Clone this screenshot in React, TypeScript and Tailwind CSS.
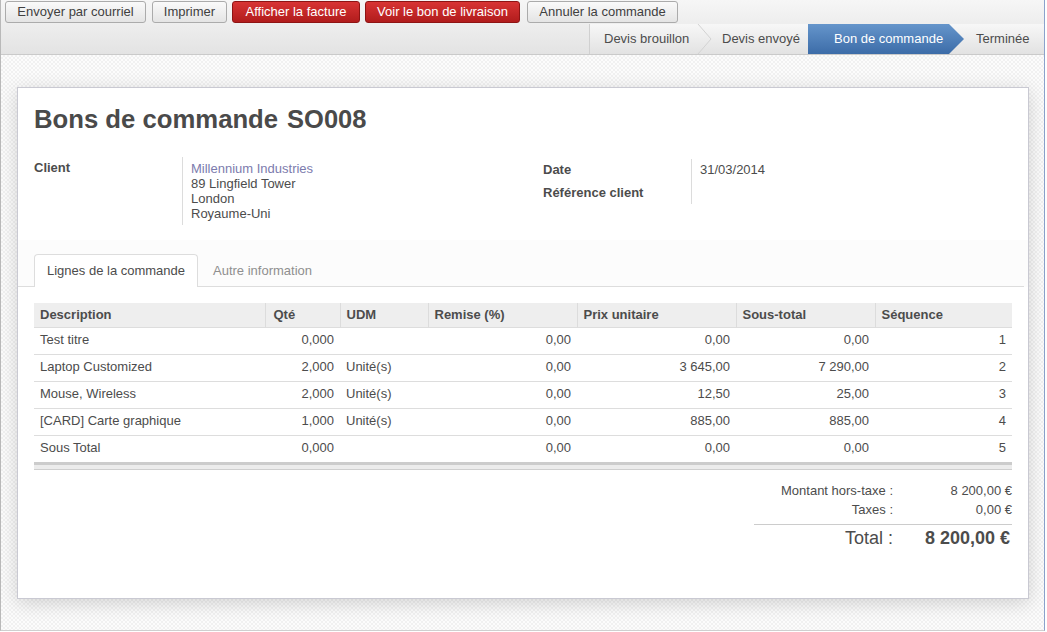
const rows = [
  { desc: "Test titre", qty: "0,000", udm: "", remise: "0,00", prix: "0,00", total: "0,00", seq: "1" },
  { desc: "Laptop Customized", qty: "2,000", udm: "Unité(s)", remise: "0,00", prix: "3 645,00", total: "7 290,00", seq: "2" },
  { desc: "Mouse, Wireless", qty: "2,000", udm: "Unité(s)", remise: "0,00", prix: "12,50", total: "25,00", seq: "3" },
  { desc: "[CARD] Carte graphique", qty: "1,000", udm: "Unité(s)", remise: "0,00", prix: "885,00", total: "885,00", seq: "4" },
  { desc: "Sous Total", qty: "0,000", udm: "", remise: "0,00", prix: "0,00", total: "0,00", seq: "5" },
];

function Btn({ label, red, className }: { label: string; red?: boolean; className?: string }) {
  return (
    <button
      className={
        (red
          ? "h-[22px] shrink-0 whitespace-nowrap rounded-[3px] border border-[#8e1414] bg-[linear-gradient(#d83434,#b11c1c)] text-[13px] leading-[20px] text-white "
          : "h-[22px] shrink-0 whitespace-nowrap rounded-[3px] border border-[#ababab] bg-[linear-gradient(#fafafa,#e4e4e4)] text-[13px] leading-[20px] text-[#404040] ") +
        (className ?? "")
      }
    >
      {label}
    </button>
  );
}

function Chevron() {
  return (
    <svg width="16" height="30" viewBox="0 0 16 30" className="shrink-0">
      <path d="M1 0 L14 15 L1 30" fill="none" stroke="#d2d2d2" strokeWidth="1" />
    </svg>
  );
}

export default function App() {
  const th = "border-r border-[#dcdcdc] px-[6px] text-left font-bold";
  const td = "px-[6px] pb-[2px]";
  return (
    <div className="h-[632px] w-[1047px] overflow-hidden bg-white font-['Liberation_Sans',Arial,sans-serif] text-[13px] text-[#4c4c4c]">
      <div className="flex h-[631px] w-[1045px] flex-col border-b border-l border-r border-b-[#cfcfcf] border-l-[#b9b9b9] border-r-[#8aa2cc]">
        {/* header */}
        <div className="h-[55px] shrink-0 border-b border-[#cacaca] bg-[linear-gradient(#f6f6f6,#e3e3e3)]">
          <div className="flex h-[24px] items-start pl-[4px] pt-[1px]">
            <Btn label="Envoyer par courriel" className="w-[141px]" />
            <Btn label="Imprimer" className="ml-[6px] w-[75px]" />
            <Btn label="Afficher la facture" red className="ml-[5px] w-[128px]" />
            <Btn label="Voir le bon de livraison" red className="ml-[5px] w-[155px]" />
            <Btn label="Annuler la commande" className="ml-[7px] w-[151px]" />
          </div>
          <div className="flex h-[30px] justify-end">
            <div className="flex h-[30px] items-stretch whitespace-nowrap border-l border-[#d0d0d0] bg-[linear-gradient(#f7f7f7,#e2e2e2)]">
              <div className="flex w-[107px] items-center pl-[14px]">Devis brouillon</div>
              <Chevron />
              <div className="flex w-[95px] items-center pl-[9px]">Devis envoyé</div>
              <div className="flex w-[156px] items-center bg-[linear-gradient(#6595cb,#3c6ca8)] pl-[26px] text-white [clip-path:polygon(0_0,141px_0,156px_50%,141px_100%,0_100%)]">
                Bon de commande
              </div>
              <div className="flex w-[80px] items-center pl-[12px]">Terminée</div>
            </div>
          </div>
        </div>

        {/* content */}
        <div className="flex-1 bg-[repeating-conic-gradient(#f1f1f1_0_25%,#fcfcfc_0_50%)] bg-[length:4px_4px] pl-[16px] pt-[32px]">
          <div className="h-[512px] w-[1012px] border border-[#c9c9d2] bg-white shadow-[0_4px_18px_rgba(0,0,0,0.16)]">
            <div className="px-[16px] pt-[15px]">
              <h1 className="flex items-baseline gap-[9px] text-[25.7px] font-bold leading-[32px] text-[#4a4a4a]">
                <span>Bons de commande</span>
                <span className="text-[25.5px]">SO008</span>
              </h1>

              <div className="mt-[22px] flex">
                <div className="flex w-[509px]">
                  <div className="w-[148px] pt-[3px] font-bold leading-[15px]">Client</div>
                  <div className="border-l border-[#dcdcdc] py-[4px] pl-[8px] leading-[15px]">
                    <div className="text-[#7c7bad]">Millennium Industries</div>
                    <div>89 Lingfield Tower</div>
                    <div>London</div>
                    <div>Royaume-Uni</div>
                  </div>
                </div>
                <div className="mt-[2px] flex flex-col">
                  <div className="flex h-[22px] items-center">
                    <div className="w-[148px] font-bold">Date</div>
                    <div className="flex h-full items-center border-l border-[#dcdcdc] pl-[8px]">31/03/2014</div>
                  </div>
                  <div className="flex h-[23px] items-center">
                    <div className="w-[148px] font-bold">Référence client</div>
                    <div className="h-full border-l border-[#dcdcdc]"></div>
                  </div>
                </div>
              </div>
            </div>

            {/* notebook */}
            <div className="mt-[15px] bg-[#fcfcfc] pt-[15px]">
              <div className="mr-[4px] flex h-[32px] items-end border-b border-[#dddddd] pl-[16px]">
                <div className="-mb-px flex h-[33px] items-center rounded-t-[4px] border border-b-0 border-[#dddddd] bg-white px-[12px]">
                  Lignes de la commande
                </div>
                <div className="flex h-[32px] items-center px-[15px] pt-[1px] text-[#8f8f8f]">Autre information</div>
              </div>
            </div>

            <div className="px-[16px] pt-[16px]">
              <table className="w-[978px] border-collapse">
                <thead>
                  <tr className="h-[24px] bg-[#eeeeee]">
                    <th className={`${th} w-[231px]`}>Description</th>
                    <th className={`${th} w-[75px] pl-[8px]`}>Qté</th>
                    <th className={`${th} w-[88px]`}>UDM</th>
                    <th className={`${th} w-[149px]`}>Remise (%)</th>
                    <th className={`${th} w-[159px]`}>Prix unitaire</th>
                    <th className={`${th} w-[139px]`}>Sous-total</th>
                    <th className="px-[6px] text-left font-bold">Séquence</th>
                  </tr>
                </thead>
                <tbody>
                  {rows.map((r, i) => (
                    <tr key={i} className="h-[27px] border-t border-[#dddddd]">
                      <td className={td}>{r.desc}</td>
                      <td className={`${td} text-right`}>{r.qty}</td>
                      <td className={td}>{r.udm}</td>
                      <td className={`${td} text-right`}>{r.remise}</td>
                      <td className={`${td} text-right`}>{r.prix}</td>
                      <td className={`${td} text-right`}>{r.total}</td>
                      <td className={`${td} text-right`}>{r.seq}</td>
                    </tr>
                  ))}
                </tbody>
              </table>
              <div className="h-[8px] w-[978px] border-b border-t-[3px] border-b-[#cfcfcf] border-t-[#cccccc] bg-[#ececec]"></div>

              <div className="mt-[11px] flex w-[978px] justify-end">
                <div className="w-[258px]">
                  <div className="flex h-[19px] items-center">
                    <div className="w-[139px] text-right">Montant hors-taxe :</div>
                    <div className="flex-1 text-right">8 200,00 €</div>
                  </div>
                  <div className="flex h-[19px] items-center">
                    <div className="w-[139px] text-right">Taxes :</div>
                    <div className="flex-1 text-right">0,00 €</div>
                  </div>
                  <div className="mt-[5px] flex border-t border-[#cccccc] pt-[1px] text-[18px] leading-[24px]">
                    <div className="w-[139px] text-right">Total :</div>
                    <div className="flex-1 pr-[2px] text-right font-bold">8 200,00 €</div>
                  </div>
                </div>
              </div>
            </div>
          </div>
        </div>
      </div>
    </div>
  );
}
